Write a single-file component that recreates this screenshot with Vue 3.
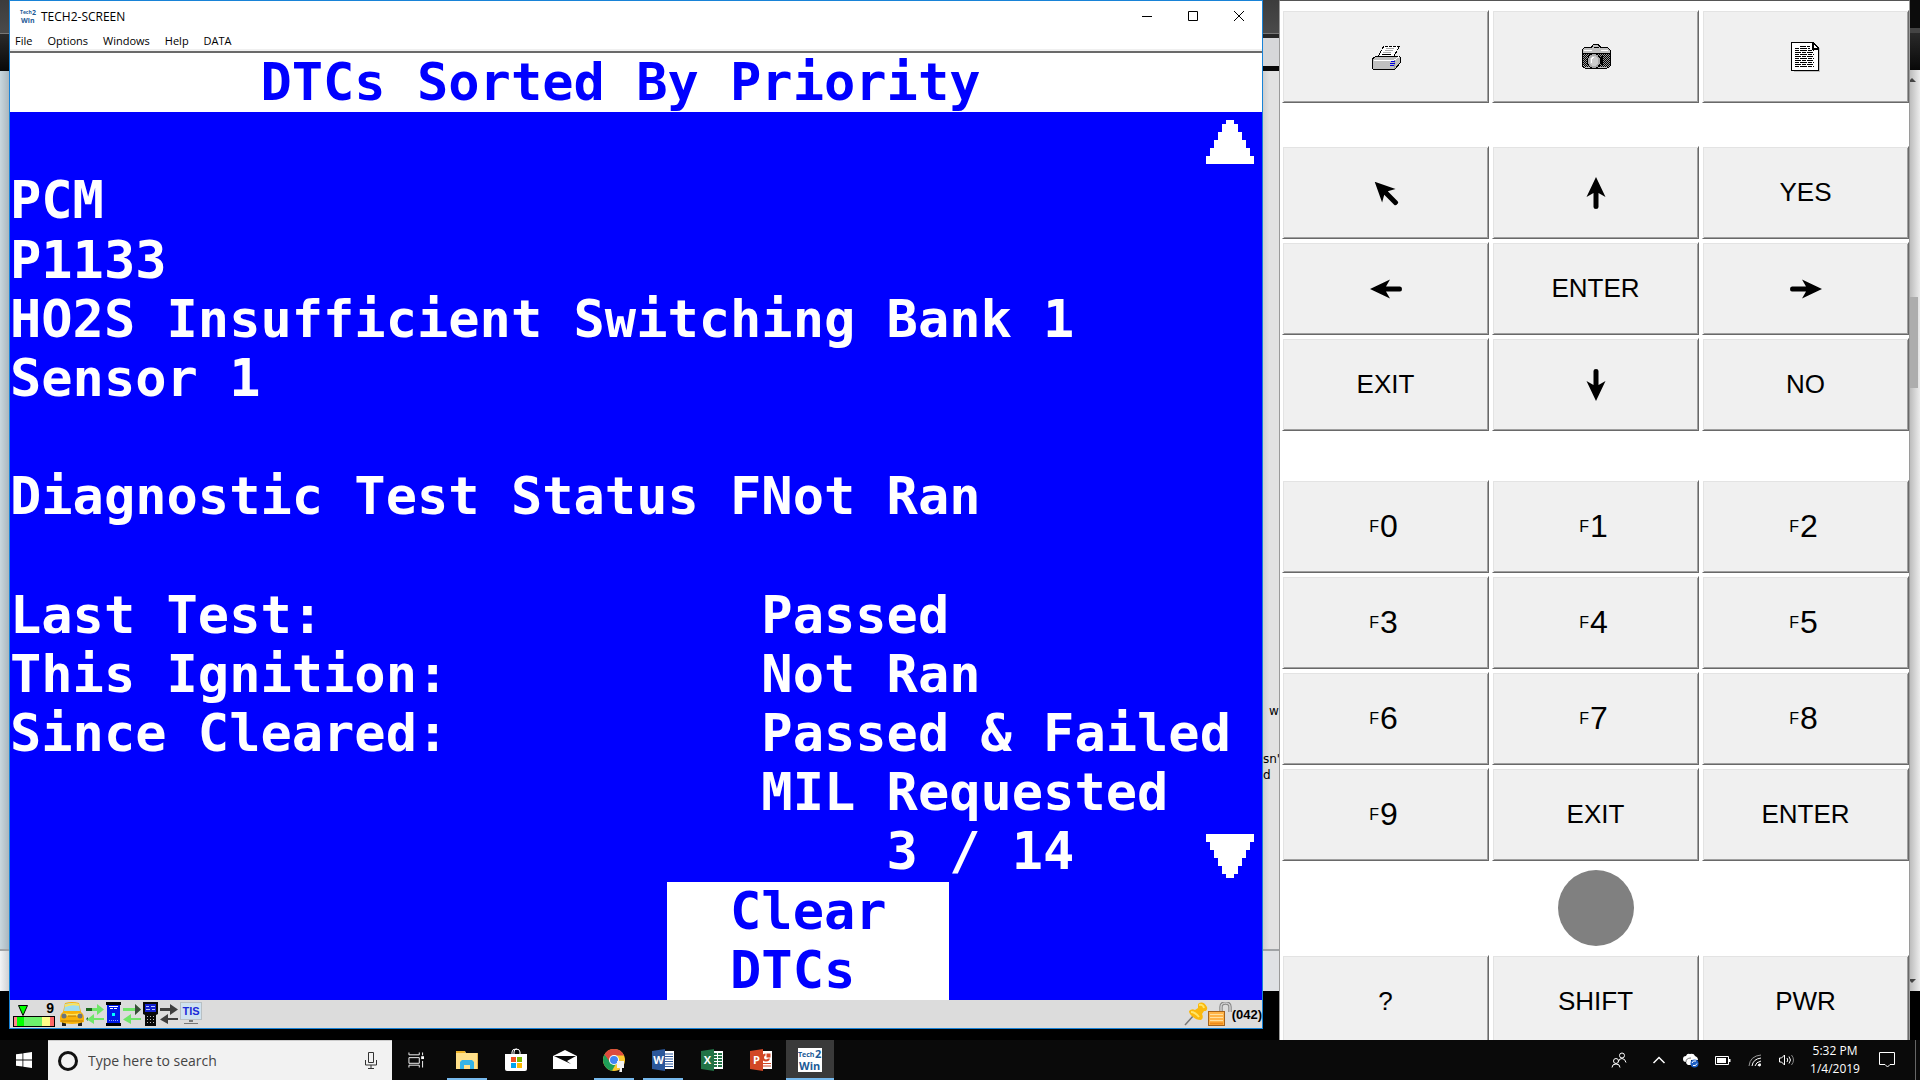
<script setup>
/**
 * TECH2 diagnostic screen with its key panel, shown on a Windows desktop.
 * The LCD is a 40 x 16 character grid; column offsets are in characters.
 */

const COL = 24; // column where the result values start

const lcdLines = [
  { row: 3, text: 'PCM' },
  { row: 4, text: 'P1133' },
  { row: 5, text: 'HO2S Insufficient Switching Bank 1' },
  { row: 6, text: 'Sensor 1' },
  { row: 8, text: 'Diagnostic Test Status FNot Ran' },
  { row: 10, text: 'Last Test:'.padEnd(COL) + 'Passed' },
  { row: 11, text: 'This Ignition:'.padEnd(COL) + 'Not Ran' },
  { row: 12, text: 'Since Cleared:'.padEnd(COL) + 'Passed & Failed' },
  { row: 13, text: ' '.repeat(COL) + 'MIL Requested' },
  { row: 14, text: ' '.repeat(COL + 4) + '3 / 14' },
];

const menus = ['File', 'Options', 'Windows', 'Help', 'DATA'];

// arrow keys share one glyph (pointing up) turned by `turn` degrees
const navKeys = [
  { turn: -45, name: 'Up left' }, { turn: 0, name: 'Up' }, { text: 'YES' },
  { turn: -90, name: 'Left' }, { text: 'ENTER' }, { turn: 90, name: 'Right' },
  { text: 'EXIT' }, { turn: 180, name: 'Down' }, { text: 'NO' },
];

const digits = ['0', '1', '2', '3', '4', '5', '6', '7', '8', '9'];
</script>

<template>
  <div class="page">
    <main class="desktop">
      <div class="strip strip-left">
        <div class="strip-tabs"></div>
        <div class="strip-bar"></div>
        <div class="strip-body"></div>
        <div class="strip-foot"></div>
      </div>

      <section class="screen">
        <header class="titlebar">
          <svg class="app-icon" viewBox="0 0 16 16" aria-hidden="true">
            <text x="0" y="6" font-size="5">Tech</text>
            <text x="12" y="7" font-size="7">2</text>
            <text x="1" y="15" font-size="7">Win</text>
          </svg>
          <h1>TECH2-SCREEN</h1>
          <div class="caption-buttons">
            <button aria-label="Minimize">
              <svg viewBox="0 0 10 10"><path d="M0 5.5H10" /></svg>
            </button>
            <button aria-label="Maximize">
              <svg viewBox="0 0 10 10"><path d="M.5 .5H9.5V9.5H.5Z" /></svg>
            </button>
            <button aria-label="Close">
              <svg viewBox="0 0 10 10"><path d="M0 0L10 10M10 0L0 10" /></svg>
            </button>
          </div>
        </header>
        <nav class="menubar">
          <button v-for="m in menus" :key="m">{{ m }}</button>
        </nav>

        <div class="lcd">
          <div class="lcd-title">DTCs Sorted By Priority</div>
          <div
            v-for="line in lcdLines"
            :key="line.row"
            class="lcd-line"
            :style="{ gridRow: line.row }"
          >{{ line.text }}</div>
          <button class="scroll scroll-up" aria-label="Scroll up">
            <svg viewBox="0 0 12 11" shape-rendering="crispEdges">
              <path d="M5 0h2v1h1v2h1v2h1v2h1v2h1v2H0V9h1V7h1V5h1V3h1V1h1z" />
            </svg>
          </button>
          <button class="scroll scroll-down" aria-label="Scroll down">
            <svg viewBox="0 0 12 11" shape-rendering="crispEdges">
              <path d="M0 0h12v2h-1v2h-1v2H9v2H8v2H7v1H5v-1H4V8H3V6H2V4H1V2H0z" />
            </svg>
          </button>
          <button class="softkey"><span>Clear</span><span>DTCs</span></button>
        </div>

        <footer class="statusbar">
          <div class="gauge">
            <div class="gauge-top">
              <svg viewBox="0 0 10 11"><path d="M.5 .5h9L5 10.500z" fill="#0f0" stroke="#000" /></svg>
              <b>9</b>
            </div>
            <div class="gauge-bar"></div>
          </div>
          <svg class="car" viewBox="0 0 24 24" aria-hidden="true">
            <path d="M2 19h4v5H2zM18 19h4v5h-4z" fill="#222" />
            <path d="M5 1q7-2 14 0l2 9q3 2 3 6v4q-12 4-24 0v-4q0-4 3-6z" fill="#f9b208" />
            <path d="M5 2q7-2 14 0l1 7H4z" fill="#9ddcf2" />
            <path d="M5 4q7-3 14-1M3 12q9 2 18 0" stroke="#ffe45a" stroke-width="2" fill="none" />
            <circle cx="4" cy="14" r="2.500" fill="#6b7480" />
            <circle cx="20" cy="14" r="2.500" fill="#6b7480" />
            <path d="M8 14h8M1 19h22" stroke="#b87804" fill="none" />
          </svg>
          <svg class="link" viewBox="0 0 18 20" aria-hidden="true">
            <path d="M0 4h6v3H0zM0 15l2-2v4z" fill="#1a6a1a" />
            <path d="M6 4h5V0l7 5.500-7 5.500V7H6zM18 14H8v-4l-7 5.500L8 20v-4h10z" fill="#6ee668" />
          </svg>
          <svg class="device" viewBox="0 0 15 24" aria-hidden="true">
            <path d="M0 0h15v3h-1v18h1v3H0v-3h1V3H0z" fill="#000" />
            <path d="M1 3h13v18H1z" fill="#0018e8" />
            <path d="M3 4.500h9M4 6.500h3M8 6.500h3" stroke="#fff" />
            <path d="M6 11h3v3H6z" fill="#0ff" />
            <path d="M3 18.500h9" stroke="#8fa0ff" stroke-dasharray="1 1" />
          </svg>
          <svg class="link" viewBox="0 0 18 20" aria-hidden="true">
            <path d="M0 4h12V0l6 5.500-6 5.500V7H0zM18 14H8v-4l-8 5.500L8 20v-4h10z" fill="#6ee668" />
            <path d="M12 0l6 5.500-6 5.500z" fill="#3a4a3a" />
          </svg>
          <svg class="device" viewBox="0 0 15 24" aria-hidden="true">
            <path d="M0 0h15v12l-2 1v11H2V13l-2-1z" fill="#080808" />
            <path d="M2 2h11v8H2z" fill="#1220d0" />
            <path d="M3 4.500h3M8 4.500h4M3 7.500h4M9 7.500h3" stroke="#b8c4ff" />
            <path d="M4 14.500h7M4 17.500h7M4 20.500h7" stroke="#bbb" stroke-dasharray="1 2" />
          </svg>
          <svg class="link" viewBox="0 0 18 20" aria-hidden="true">
            <path d="M0 4h10V0l8 5.500-8 5.500V7H0zM18 14H8v-4l-8 5.500L8 20v-4h10z" fill="#3e3e3e" />
          </svg>
          <svg class="tis" viewBox="0 0 22 24" aria-hidden="true">
            <rect x=".5" y=".5" width="21" height="17" fill="#cfe2f0" stroke="#b8c0c4" />
            <path d="M9 18h4v2H9zM4 21h14v1H4z" fill="#777" />
            <text x="11" y="13" font-size="11" font-weight="700" text-anchor="middle">TIS</text>
          </svg>
          <div class="status-right">
            <svg class="pin" viewBox="0 0 24 24" aria-hidden="true">
              <path d="M1 23L10 13" stroke="#777" stroke-width="1.500" />
              <path d="M14 2q5-4 9 3 1 4-3 4l-2 3q2 4-1 6-5 0-8-3-4-3-4-6 3-3 6-1l3-2z" fill="#fbb80c" />
              <path d="M15 3q4-1 5 3M7 10q4 0 8 5" stroke="#ffe566" stroke-width="2" fill="none" />
            </svg>
            <svg class="lock" viewBox="0 0 24 24" aria-hidden="true">
              <path d="M13 9V5q0-4 4.500-4T22 5v5" stroke="#8a8a8a" stroke-width="3.500" fill="none" />
              <path d="M13 9V5q0-4 4.500-4T22 5v5" stroke="#eee" fill="none" />
              <rect x=".5" y="9.500" width="16" height="14" fill="#ffb347" stroke="#a5621a" />
              <path d="M2 12.500h13M2 15.500h13M2 18.500h13" stroke="#ffe0a0" />
              <path d="M2 21.500h13" stroke="#f08a18" stroke-width="2" />
            </svg>
            <b>(042)</b>
          </div>
        </footer>
      </section>

      <div class="strip strip-mid">
        <div class="strip-tabs"></div>
        <div class="strip-bar"></div>
        <div class="strip-body">
          <p class="peek-w">w</p>
          <p>sn'</p>
          <p>d</p>
        </div>
        <div class="strip-foot"></div>
      </div>

      <section class="keypad">
        <div class="keys">
          <button class="key" aria-label="Print">
            <svg class="key-icon" viewBox="0 0 30 30" shape-rendering="crispEdges">
              <path d="M8 15L13 4H28L22 15" fill="#fff" />
              <path d="M7.500 14L12.500 4.500H28.500L23 14" fill="none" stroke="#000" stroke-dasharray="3 1" />
              <path d="M15 6.500h8M14 8.500h8M12 10.500h8" stroke="#aaa" />
              <path d="M11 12.500h9M9 14.500h12" stroke="#000" stroke-width="1" />
              <path d="M1 17l5-3h22l1 1v6l-5 6H2l-1-2z" fill="#c0c0c0" stroke="#000" />
              <path d="M3 18.500h20l5-4" stroke="#fff" fill="none" />
              <path d="M23.500 27V18" stroke="#999" />
              <path d="M20 19.500h4M19 21.500h5M19 23.500h4" stroke="#00d" />
            </svg>
          </button>
          <button class="key" aria-label="Snapshot">
            <svg class="key-icon" viewBox="0 0 30 30" shape-rendering="crispEdges">
              <defs>
                <pattern id="grip" width="2" height="2" patternUnits="userSpaceOnUse">
                  <rect width="2" height="2" fill="#999" />
                  <path d="M0 0h1v1H0zM1 1h1v1H1z" fill="#000" />
                </pattern>
              </defs>
              <path d="M1 8l3-3 6 1 3-4h4l3 4 6-1 3 3v16l-3 2H4l-3-2z" fill="#c0c0c0" stroke="#000" />
              <path d="M2 12h27v12l-2 1H4l-2-2z" fill="url(#grip)" />
              <path d="M1 11.500h28M13 5.500h5" stroke="#000" />
              <path d="M3 8.500h8M20 8.500h7" stroke="#fff" />
              <ellipse cx="13" cy="19" rx="6.500" ry="7.500" fill="#aaa" stroke="#000" />
              <ellipse cx="13" cy="19" rx="4.500" ry="5.500" fill="#ccc" />
              <path d="M10 21v-4l3-2" fill="none" stroke="#fff" />
              <path d="M20 14h2v9h-2z" fill="#000" />
            </svg>
          </button>
          <button class="key" aria-label="Report">
            <svg class="key-icon" viewBox="0 0 30 30" shape-rendering="crispEdges">
              <path d="M3 6h26v24H3z" fill="#c0c0c0" />
              <path d="M.5 .500H22l5 5v22.500H.500z" fill="#fff" stroke="#000" />
              <path d="M21.500 1v5.500H27" fill="none" stroke="#000" stroke-width="2" />
              <path d="M9 4.500h10M4 10.500h19M4 14.500h19M4 18.500h19M4 22.500h19" stroke="#000" stroke-dasharray="6 1 4 1" />
              <path d="M4 6.500h15M4 8.500h19M4 12.500h19M4 16.500h19M4 20.500h19M4 24.500h19" stroke="#000" stroke-dasharray="4 1 7 1" />
            </svg>
          </button>
        </div>

        <div class="keys nav-keys">
          <button v-for="(k, i) in navKeys" :key="i" class="key" :aria-label="k.name">
            <template v-if="k.text">{{ k.text }}</template>
            <svg v-else class="arrow" viewBox="0 0 32 32" :style="{ transform: `rotate(${k.turn}deg)` }">
              <path d="M16 0L25.500 20L18.500 16V30Q18.500 32 16 32T13.500 30V16L6.500 20Z" />
            </svg>
          </button>
        </div>

        <div class="keys digit-keys">
          <button v-for="d in digits" :key="d" class="key digit"><small>F</small>{{ d }}</button>
          <button class="key">EXIT</button>
          <button class="key">ENTER</button>
        </div>

        <div class="lamp"></div>

        <div class="keys">
          <button class="key">?</button>
          <button class="key">SHIFT</button>
          <button class="key">PWR</button>
        </div>
      </section>

      <div class="strip strip-right">
        <div class="strip-tabs"></div>
        <div class="strip-bar"></div>
        <div class="strip-body">
          <span class="tri tri-up"></span>
          <span class="thumb"></span>
          <span class="tri tri-down"></span>
        </div>
      </div>
    </main>

    <footer class="taskbar">
      <button class="task start" aria-label="Start">
        <svg viewBox="0 0 16 16"><path d="M0 2.300L6.500 1.400V7.600H0zM7.300 1.300L16 0V7.600H7.300zM0 8.400H6.500V14.600L0 13.700zM7.300 8.400H16V16L7.300 14.700z" fill="#fff" /></svg>
      </button>
      <label class="search">
        <span class="ring"></span>
        <input type="text" placeholder="Type here to search" aria-label="Search">
        <svg class="mic" viewBox="0 0 12 17"><path d="M3.500 .500h5v10h-5zM.500 8v5h11V8M6 13v3M3 16.500h6" fill="none" stroke="#333" /></svg>
      </label>
      <button class="task task-view" aria-label="Task view">
        <svg viewBox="0 0 17 16" fill="none" stroke="#fff"><path d="M1 0v2.500h11V0M1 5.500h11v6H1zM1 16v-2.500h11V16M15.500 0v3M15.500 9v7" /><path d="M14 4h3v3h-3z" fill="#fff" stroke="none" /></svg>
      </button>
      <button class="task open" aria-label="File Explorer">
        <svg viewBox="0 0 24 24">
          <path d="M1 3h9l1 2h11v16H1z" fill="#ffe08a" />
          <path d="M1 3h9v2H1z" fill="#f0b429" />
          <path d="M22 5h1v16h-1z" fill="#e8b84a" />
          <path d="M5 21v-7l2-2h10l2 2v7h-4v-4H9v4z" fill="#35b4e8" />
        </svg>
      </button>
      <button class="task" aria-label="Store">
        <svg viewBox="0 0 24 24">
          <path d="M8 7V4q0-3 4-3t4 3v3M10 7V4q0-3 3-3" fill="none" stroke="#fff" />
          <path d="M1 6h22v15q0 2-2 2H3q-2 0-2-2z" fill="#fff" />
          <path d="M7 9h5v5H7z" fill="#f25022" /><path d="M13 9h5v5h-5z" fill="#7fba00" />
          <path d="M7 15h5v5H7z" fill="#00a4ef" /><path d="M13 15h5v5h-5z" fill="#ffb900" />
        </svg>
      </button>
      <button class="task" aria-label="Mail">
        <svg viewBox="0 0 24 24"><path d="M0 8L12 2l12 6v13H0z" fill="#fff" /><path d="M1 8h22l-9 5 4 3z" fill="#080808" /></svg>
      </button>
      <button class="task open" aria-label="Chrome">
        <svg viewBox="0 0 24 24">
          <circle cx="12" cy="12" r="11" fill="#fbc92e" />
          <path d="M12 12L2.500 6.500A11 11 0 0 0 10 22.800L15 14z" fill="#1e9e58" />
          <path d="M2.500 6.500A11 11 0 0 1 22 7.500H12L8 14z" fill="#dd4b3e" />
          <circle cx="12" cy="12" r="5" fill="#fff" /><circle cx="12" cy="12" r="4" fill="#4285f4" />
          <path d="M15 13h7v7h-2v5h-3l1-5h-3z" fill="#f4f4f4" />
        </svg>
      </button>
      <button class="task open" aria-label="Word">
        <svg viewBox="0 0 24 24">
          <path d="M12 3h11v18H12z" fill="#fff" />
          <path d="M14 6h8M14 8.500h8M14 11h8M14 13.500h8M14 16h8M14 18.500h8" stroke="#2b579a" />
          <path d="M1 3l13-2v22L1 21z" fill="#2b579a" />
          <text x="7.500" y="16" class="glyph">W</text>
        </svg>
      </button>
      <button class="task" aria-label="Excel">
        <svg viewBox="0 0 24 24">
          <path d="M12 3h11v18H12z" fill="#fff" />
          <path d="M14 6h3M14 9h3M14 12h3M14 15h3M14 18h3M18 6h4M18 9h4M18 12h4M18 15h4M18 18h4" stroke="#217346" stroke-width="2" />
          <path d="M1 3l13-2v22L1 21z" fill="#217346" />
          <text x="7.500" y="16" class="glyph">X</text>
        </svg>
      </button>
      <button class="task" aria-label="PowerPoint">
        <svg viewBox="0 0 24 24">
          <path d="M12 3h11v18H12z" fill="#fff" />
          <path d="M14 15.500h8M14 18h8" stroke="#d24726" />
          <circle cx="17" cy="9.500" r="3" fill="none" stroke="#d24726" stroke-width="2" />
          <path d="M17 5h5v5h-5z" fill="#d24726" stroke="#fff" />
          <path d="M1 3l13-2v22L1 21z" fill="#d24726" />
          <text x="7.500" y="16" class="glyph">P</text>
        </svg>
      </button>
      <button class="task active" aria-label="Tech2Win">
        <svg class="tech" viewBox="0 0 24 24">
          <path d="M0 0h24v24H0z" fill="#fff" />
          <text x="0" y="9" font-size="7">Tech</text>
          <text x="17" y="10" font-size="11">2</text>
          <text x="1" y="22" font-size="11">Win</text>
        </svg>
      </button>

      <div class="tray">
        <button class="tray-item people" aria-label="People">
          <svg viewBox="0 0 16 16" fill="none" stroke="#fff"><circle cx="11" cy="3.500" r="2.500" /><circle cx="5" cy="9" r="2.500" /><path d="M7.500 9.500Q8 6.500 11 6.500T15 10.500M1 15.500Q1 12 5 12T9 15.500" /></svg>
        </button>
        <button class="tray-item" aria-label="Show hidden icons">
          <svg viewBox="0 0 16 16" fill="none" stroke="#fff" stroke-width="1.500"><path d="M2.500 11L8 5.500L13.500 11" /></svg>
        </button>
        <button class="tray-item" aria-label="OneDrive">
          <svg viewBox="0 0 16 16"><path d="M0 7Q0 4 3 4 4 1 7 2q4-1 5 2 3 1 3 4H8v5H5Q3 12 3 10 0 10 0 7z" fill="#fff" /><path d="M3 10q0-4 5-4" stroke="#777" fill="none" /><circle cx="11.500" cy="11.500" r="4" fill="#1d5fc4" /><path d="M9 11q1-3 4-2M14 11.500q-1 3-4 2" stroke="#fff" fill="none" /></svg>
        </button>
        <button class="tray-item" aria-label="Battery">
          <svg viewBox="0 0 16 16"><path d="M.5 4.500h13v8H.5z" fill="none" stroke="#fff" /><path d="M2 6h9v5H2zM14 7h1.500v3H14z" fill="#fff" /></svg>
        </button>
        <button class="tray-item" aria-label="Network">
          <svg viewBox="0 0 16 16" fill="none" stroke="#fff"><path d="M2 14Q3 4 14 3" stroke="#999" /><path d="M5 14Q6 7 14 6M8 14Q9 10 14 9M11 14q0-2 3-2" /><circle cx="12.500" cy="13" r="1" fill="#fff" /></svg>
        </button>
        <button class="tray-item" aria-label="Volume">
          <svg viewBox="0 0 16 16" fill="none" stroke="#fff"><path d="M.5 6h2l3-3v10l-3-3h-2zM8 6q1.500 2 0 4M10 4.500q3 3.500 0 7" /><path d="M12.500 3q4 5 0 10" stroke="#888" /></svg>
        </button>
        <button class="clock"><span>5:32 PM</span><span>1/4/2019</span></button>
        <button class="tray-item notes" aria-label="Notifications">
          <svg viewBox="0 0 16 16" fill="none" stroke="#fff"><path d="M.5 .500h15v12H11L8.500 15 6 12.500H.5z" /></svg>
        </button>
      </div>
    </footer>
  </div>
</template>

<style>
body {
  margin: 0;
}
</style>

<style scoped>
.page {
  display: flex;
  flex-direction: column;
  height: 100vh;
  overflow: hidden;
  background: #000;
  font-family: "Open Sans", "Noto Sans", sans-serif;
  font-size: 12px;
  color: #000;
}

button {
  margin: 0;
  padding: 0;
  border: 0;
  background: none;
  font: inherit;
  color: inherit;
}

.desktop {
  flex: 1;
  min-height: 0;
  display: flex;
}

/* slivers of the browser window that show between the two tool windows */
.strip {
  display: flex;
  flex-direction: column;
  margin-bottom: 49px;
  overflow: hidden;
}

.strip-tabs {
  flex: 0 0 33px;
  background: linear-gradient(#3c3c3c, #4a4a4a);
  border-bottom: 1px solid #777;
}

.strip-bar {
  flex: 0 0 37px;
  background: linear-gradient(#2a2a2a, #080808);
}

.strip-body {
  flex: 1;
}

.strip-foot {
  flex: 0 0 40px;
  border-top: 2px solid #a0a3a6;
}

.strip-left {
  flex: 0 0 9px;
}

.strip-left .strip-body {
  background: linear-gradient(to right, #c8d7de, #aab7be);
}

.strip-left .strip-foot {
  background: linear-gradient(to right, #f2f4f6, #cfd1d3);
}

.strip-mid {
  flex: 0 0 16px;
}

.strip-mid .strip-bar {
  box-sizing: border-box;
  border-top: 4px solid #262626;
  border-bottom: 5px solid #080808;
  background: #d6d7d9;
}

.strip-mid .strip-body {
  background: linear-gradient(to right, #cfcfcf, #e2e2e2 40%);
}

.strip-mid .strip-foot {
  background: #dfe1e4;
}

.strip-mid p {
  margin: 0;
  font-family: "DejaVu Sans", sans-serif;
  font-size: 12px;
  line-height: 16px;
  white-space: nowrap;
}

.strip-mid .peek-w {
  padding: 632px 0 32px 6px;
}

.strip-right {
  flex: 0 0 10px;
}

.strip-right .strip-tabs {
  flex-basis: 28px;
  background: #0c0c0c;
  border-bottom: 5px solid #444;
}

.strip-right .strip-body {
  display: flex;
  flex-direction: column;
  background: linear-gradient(to right, #bdbdbd, #ececec);
}

.tri {
  border: 4px solid transparent;
}

.tri-up {
  margin: 4px 0 0 -2px;
  width: 0;
  border-bottom-color: #444;
}

.tri-down {
  margin: auto 0 4px -2px;
  width: 0;
  border-top-color: #444;
}

.thumb {
  margin-top: 215px;
  width: 8px;
  height: 91px;
  background: #adadad;
}

/* ---- screen window ---- */
.screen {
  flex: 1256 1 0;
  min-width: 0;
  display: flex;
  flex-direction: column;
  margin-bottom: 11px;
  border: 1px solid #1883d7;
  box-sizing: border-box;
  background: #fff;
}

.titlebar {
  display: flex;
  align-items: center;
  height: 30px;
  padding-left: 10px;
}

.titlebar h1 {
  margin: 0 auto 0 5px;
  font-size: 12px;
  font-weight: 400;
}

.app-icon {
  width: 16px;
  height: 16px;
  overflow: visible;
  fill: #1c5a96;
  font-weight: 700;
}

.caption-buttons {
  display: flex;
  height: 100%;
}

.caption-buttons button {
  width: 46px;
  display: grid;
  place-items: center;
}

.caption-buttons svg {
  width: 10px;
  height: 10px;
  fill: none;
  stroke: #000;
}

.menubar {
  display: flex;
  gap: 15px;
  height: 20px;
  padding-left: 5px;
  font-size: 11px;
  line-height: 20px;
  border-bottom: 2px solid #6a6a6a;
  box-shadow: inset 0 -2px #f0f0f0;
}

.lcd {
  flex: 1;
  min-height: 0;
  display: grid;
  grid-template-rows: repeat(16, minmax(0, 1fr));
  grid-template-columns: minmax(0, 1fr);
  overflow: hidden;
  background: #00f;
  color: #fff;
  font-family: "DejaVu Sans Mono", "Liberation Mono", monospace;
  font-size: 52px;
  font-weight: 700;
  line-height: 59px;
  white-space: pre;
}

.lcd-title {
  grid-area: 1 / 1;
  padding-left: 8ch;
  background: #fff;
  color: #00f;
}

.lcd-line {
  grid-column: 1;
}

.scroll {
  grid-column: 1;
  justify-self: end;
  align-self: start;
  margin: 8px 8px 0 0;
  line-height: 0;
}

.scroll-up {
  grid-row: 2;
}

.scroll-down {
  grid-row: 14;
  margin-top: 12px;
}

.scroll svg {
  width: 48px;
  height: 44px;
  fill: #fff;
}

.softkey {
  grid-area: 15 / 1 / 17 / 2;
  display: grid;
  grid-template-rows: 1fr 1fr;
  width: 9ch;
  margin-left: 21ch;
  padding-left: 2ch;
  background: #fff;
  color: #00f;
  text-align: left;
}

.statusbar {
  display: flex;
  align-items: center;
  gap: 2px;
  height: 28px;
  padding-left: 3px;
  background: #dcdcdc;
  font-family: "Liberation Sans", sans-serif;
}

.gauge {
  width: 42px;
  margin-right: 3px;
}

.gauge-top {
  display: flex;
  justify-content: space-between;
  align-items: flex-end;
  height: 15px;
  padding: 0 1px 0 5px;
  font-size: 14px;
  line-height: 15px;
}

.gauge-top svg {
  width: 10px;
  height: 11px;
}

.gauge-bar {
  box-sizing: border-box;
  height: 11px;
  border: 1px solid #000;
  background: linear-gradient(to right, #f88 3px, #0f0 3px 10px, #6cf06c 10px 28px, #ff8 28px 36px, #f66 36px);
}

.car {
  width: 24px;
  height: 24px;
}

.link {
  width: 18px;
  height: 20px;
}

.device {
  width: 15px;
  height: 24px;
}

.tis {
  width: 22px;
  height: 24px;
  fill: #1a2ad8;
}

.status-right {
  display: flex;
  align-items: center;
  margin-left: auto;
  font-size: 13px;
}

.pin,
.lock {
  width: 24px;
  height: 24px;
}

/* ---- key panel ---- */
.keypad {
  flex: 629 1 0;
  min-width: 0;
  box-sizing: border-box;
  padding: 9px 0 0 2px;
  border: 1px solid #9a9a9a;
  border-top-color: #555;
  border-bottom: 0;
  background: #fff;
  overflow: hidden;
  font-family: "Liberation Sans", Arial, sans-serif;
}

.keys {
  display: grid;
  grid-template-columns: repeat(3, minmax(0, 1fr));
  grid-auto-rows: 93px;
  gap: 3px;
}

.nav-keys {
  margin: 43px 0 49px;
}

.key {
  display: flex;
  align-items: center;
  justify-content: center;
  border: 1px solid #fff;
  border-right-color: #696969;
  border-bottom-color: #696969;
  background: #f0f0f0;
  box-shadow: inset 1px 1px #e3e3e3, inset -1px -1px #a0a0a0;
  font-size: 26px;
}

.key-icon {
  width: 30px;
  height: 30px;
}

.arrow {
  width: 32px;
  height: 32px;
}

.digit {
  padding-right: 4px;
  font-size: 32px;
}

.digit small {
  margin-right: 1px;
  font-size: 16px;
}

.lamp {
  width: 76px;
  height: 76px;
  margin: 9px auto;
  border-radius: 50%;
  background: #808080;
}

/* ---- taskbar ---- */
.taskbar {
  flex: 0 0 40px;
  display: flex;
  background: #0a0a0a;
  color: #fff;
}

.task {
  width: 48px;
  margin-right: 1px;
  display: grid;
  place-items: center;
}

.task svg {
  width: 24px;
  height: 24px;
}

.start {
  margin-right: 0;
}

.start svg,
.task-view svg {
  width: 16px;
  height: 16px;
}

.task-view {
  margin-right: 3px;
}

.open {
  background: linear-gradient(#76b9ed, #76b9ed) center bottom / 40px 2px no-repeat;
}

.active {
  background: #3a3a3a;
  box-shadow: inset 0 -2px #76b9ed;
}

.glyph {
  font-size: 11px;
  font-weight: 700;
  text-anchor: middle;
  fill: #fff;
}

.tech {
  overflow: visible;
  fill: #1c5a96;
  font-weight: 700;
}

.search {
  display: flex;
  align-items: center;
  box-sizing: border-box;
  width: 344px;
  padding: 0 15px 0 10px;
  border-top: 1px solid #ccc;
  background: #f2f2f2;
}

.ring {
  box-sizing: border-box;
  width: 20px;
  height: 20px;
  border: 3px solid #111;
  border-radius: 50%;
}

.search input {
  flex: 1;
  min-width: 0;
  margin-left: 10px;
  padding: 0;
  border: 0;
  outline: 0;
  background: none;
  font: inherit;
  font-size: 14px;
}

.search input::placeholder {
  color: #444;
}

.mic {
  width: 12px;
  height: 17px;
}

.tray {
  display: flex;
  margin: 0 4px 0 auto;
  padding-right: 8px;
  border-right: 1px solid #666;
}

.tray-item {
  width: 32px;
  display: grid;
  place-items: center;
}

.tray-item svg {
  width: 16px;
  height: 16px;
}

.people {
  margin-right: 8px;
}

.clock {
  display: flex;
  flex-direction: column;
  justify-content: center;
  width: 64px;
  line-height: 18px;
}

.notes {
  width: 40px;
}
</style>
